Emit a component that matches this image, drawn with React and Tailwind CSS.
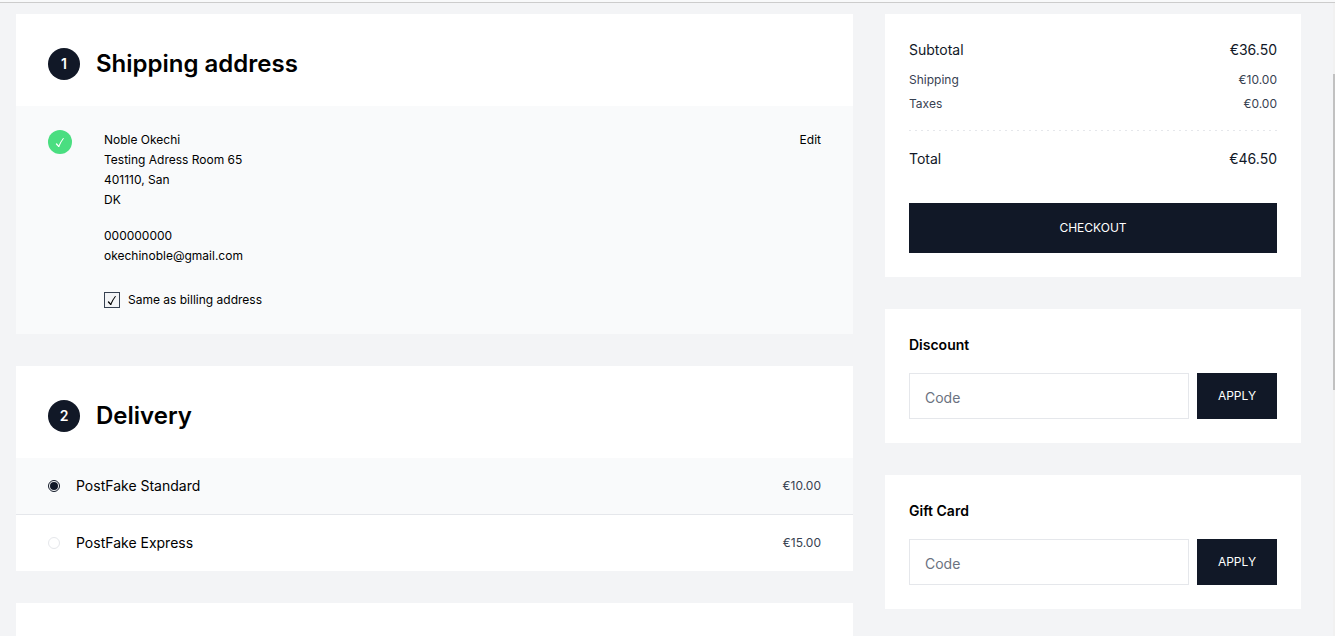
import { useState } from 'react';
import clsx from 'clsx';

const shippingOptions = [
  { id: 'standard', name: 'PostFake Standard', price: '€10.00' },
  { id: 'express', name: 'PostFake Express', price: '€15.00' },
];

const CheckMark = ({ className }) => (
  <svg viewBox="0 0 10 12" fill="none" stroke="currentColor" className={className}>
    <path d="M1.2 7.6 L3.6 10.2" strokeWidth="1.5" strokeLinecap="round" />
    <path d="M3.6 10.4 C4.8 7.4 6.2 4.6 8.6 1.6" strokeWidth="1.1" strokeLinecap="round" />
  </svg>
);

const StepHeader = ({ index, title }) => (
  <div className="flex items-center gap-4 px-8 pt-8 pb-6">
    <div className="flex h-8 w-8 items-center justify-center rounded-full bg-[#111827] text-sm font-semibold text-white">
      {index}
    </div>
    <h2 className="text-2xl leading-9 font-semibold">{title}</h2>
  </div>
);

const CodeForm = ({ id, title }) => {
  const [code, setCode] = useState('');

  return (
    <form className="bg-white p-6" onSubmit={(e) => e.preventDefault()}>
      <label htmlFor={id} className="mb-4 block text-sm leading-6 font-semibold">
        {title}
      </label>
      <div className="flex gap-2">
        <input
          id={id}
          type="text"
          placeholder="Code"
          value={code}
          onChange={(e) => setCode(e.target.value)}
          className="h-[46px] min-w-0 flex-1 border border-[#e5e7eb] px-[15px] pt-0.5 text-sm outline-none placeholder:text-[#6b7280] focus:border-gray-400"
        />
        <button type="submit" className="w-20 bg-[#111827] text-xs text-white uppercase">
          Apply
        </button>
      </div>
    </form>
  );
};

const ShippingAddress = () => {
  const [sameAsBilling, setSameAsBilling] = useState(true);

  return (
    <section className="bg-white">
      <StepHeader index={1} title="Shipping address" />
      <div className="flex items-start gap-8 bg-[#f9fafb] px-8 py-6 text-xs leading-5">
        <div className="flex h-6 w-6 items-center justify-center rounded-full bg-[#4ade80] text-white">
          <CheckMark className="h-[11px] w-[10px]" />
        </div>
        <div className="flex-1">
          <div className="flex items-start justify-between">
            <div>
              <p>Noble Okechi</p>
              <p>Testing Adress Room 65</p>
              <p>401110, San</p>
              <p>DK</p>
            </div>
            <button type="button">Edit</button>
          </div>
          <div className="mt-4">
            <p>000000000</p>
            <p>okechinoble@gmail.com</p>
          </div>
          <label className="mt-6 flex items-center gap-2">
            <span className="grid h-4 w-4 place-items-center">
              <input
                type="checkbox"
                checked={sameAsBilling}
                onChange={(e) => setSameAsBilling(e.target.checked)}
                className="col-start-1 row-start-1 h-4 w-4 appearance-none border border-[#374151] bg-[#f3f4f6]"
              />
              {sameAsBilling && (
                <CheckMark className="pointer-events-none col-start-1 row-start-1 h-[11px] w-[10px]" />
              )}
            </span>
            Same as billing address
          </label>
        </div>
      </div>
    </section>
  );
};

const Delivery = () => {
  const [selected, setSelected] = useState('standard');

  return (
    <section className="bg-white">
      <StepHeader index={2} title="Delivery" />
      <div className="divide-y divide-[#e5e7eb]">
        {shippingOptions.map((option) => (
          <label
            key={option.id}
            className={clsx(
              'flex items-center gap-4 px-8 py-4 text-sm leading-6',
              selected === option.id && 'bg-[#f9fafb]'
            )}
          >
            <input
              type="radio"
              name="shipping-option"
              value={option.id}
              checked={selected === option.id}
              onChange={() => setSelected(option.id)}
              className="h-3 w-3 appearance-none rounded-full border border-[#e5e7eb] p-px checked:border-[#111827] checked:bg-[#111827] checked:bg-clip-content"
            />
            <span className="flex-1">{option.name}</span>
            <span className="text-xs text-[#374151]">{option.price}</span>
          </label>
        ))}
      </div>
    </section>
  );
};

const Summary = () => (
  <section className="bg-white p-6 text-[#111827]">
    <div className="flex justify-between text-sm leading-6">
      <span>Subtotal</span>
      <span>€36.50</span>
    </div>
    <div className="mt-2 flex flex-col gap-1 text-xs leading-5 text-[#374151]">
      <div className="flex justify-between">
        <span>Shipping</span>
        <span>€10.00</span>
      </div>
      <div className="flex justify-between">
        <span>Taxes</span>
        <span>€0.00</span>
      </div>
    </div>
    <div className="my-4 h-px bg-[repeating-linear-gradient(to_right,#e5e7eb_0_2px,transparent_2px_6px)]" />
    <div className="flex justify-between text-sm leading-6">
      <span>Total</span>
      <span>€46.50</span>
    </div>
    <button type="button" className="mt-8 h-[50px] w-full bg-[#111827] text-xs text-white uppercase">
      Checkout
    </button>
  </section>
);

const App = () => {
  return (
    <div className="flex h-screen flex-col overflow-hidden bg-[#f3f4f6] font-['Inter',sans-serif] text-black">
      <div className="h-[3px] shrink-0 border-b border-[#cccccc] bg-[#f8f9fa]" />
      <div className="flex min-h-0 flex-1">
        <main className="grid min-w-0 flex-1 grid-cols-[minmax(0,1fr)_416px] gap-8 pt-[11px] pr-8 pl-4">
          <div className="flex flex-col gap-8">
            <ShippingAddress />
            <Delivery />
            <section className="flex-1 bg-white" />
          </div>
          <aside className="flex flex-col gap-8">
            <Summary />
            <CodeForm id="discount-code" title="Discount" />
            <CodeForm id="gift-card-code" title="Gift Card" />
          </aside>
        </main>
        <div className="w-[2px] bg-[#f1f1f1] pt-[71px]">
          <div className="h-[316px] bg-[#c1c1c1]" />
        </div>
      </div>
    </div>
  );
};

export default App;
